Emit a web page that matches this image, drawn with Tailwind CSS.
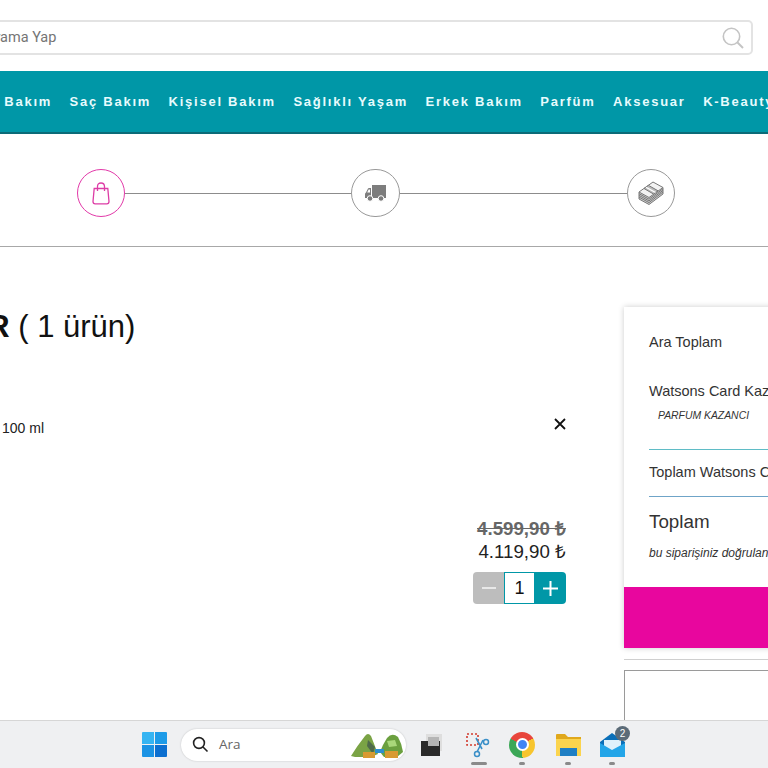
<!DOCTYPE html>
<html lang="en">
  <head>
    <meta charset="UTF-8" />
    <title>Sepet</title>
    <script src="https://cdn.jsdelivr.net/npm/@tailwindcss/browser@4"></script>
  </head>
  <body class="w-[768px] h-[768px] overflow-hidden bg-white flex flex-col font-['Liberation_Sans',sans-serif] text-[#222]">
    <main class="flex-1 min-h-0 overflow-hidden">
      <!-- search -->
      <div class="h-[71px] pt-[20px] pr-[15px]">
        <div class="h-[35px] -ml-[36px] flex items-center justify-between border-2 border-[#e3e3e3] rounded-[5px] pl-[20px] pr-[6px]">
          <span class="font-['Roboto',sans-serif] text-[14.5px] text-[#757575]">Arama Yap</span>
          <svg width="24" height="24" viewBox="0 0 24 24" fill="none" stroke="#c4c4c4" stroke-width="1.6">
            <circle cx="10.5" cy="10.5" r="8.2" />
            <path d="M16.5 16.5 L22 22" stroke-width="2" />
          </svg>
        </div>
      </div>

      <!-- nav -->
      <nav class="h-[63px] bg-[#0097a7] border-b-2 border-[#0c6b78] flex items-center gap-[17.5px] -ml-[29px] whitespace-nowrap text-[13px] font-bold tracking-[1.75px] text-[#e8fbfd]">
        <span>Cilt Bakım</span>
        <span>Saç Bakım</span>
        <span>Kişisel Bakım</span>
        <span>Sağlıklı Yaşam</span>
        <span>Erkek Bakım</span>
        <span>Parfüm</span>
        <span>Aksesuar</span>
        <span>K-Beauty</span>
      </nav>

      <!-- checkout steps -->
      <div class="h-[113px] border-b border-[#a8a8a8] pl-[77px] pr-[93px] pt-[6px] flex items-center">
        <div class="w-[48px] h-[48px] shrink-0 rounded-full border border-[#e23aa9] flex items-center justify-center">
          <svg width="18" height="23" viewBox="0 0 18 23" fill="none" stroke="#dd3da6" stroke-width="1.3">
            <path d="M2.2 6.5 H15.8 L17 19.5 Q17 21.8 14.8 21.8 H3.2 Q1 21.8 1 19.5 Z" />
            <path d="M5.5 9 V4.6 Q5.5 1 9 1 Q12.5 1 12.5 4.6 V9" />
          </svg>
        </div>
        <div class="w-[226px] h-px bg-[#8c8c8c]"></div>
        <div class="w-[49px] h-[48px] shrink-0 rounded-full border border-[#999] flex items-center justify-center">
          <svg width="21" height="18" viewBox="0 0 21 18" fill="#7d7d7d">
            <path d="M7 1 H21 V14 H7 Z" />
            <path d="M6 4 V14 H0 V10 Q0 9 1 8.5 L3 4.5 Q3.3 4 4 4 Z" />
            <path d="M3.6 5.5 H5 V8.5 H2.2 Z" fill="#fff" />
            <circle cx="5" cy="14.5" r="2.8" stroke="#fff" stroke-width="1" />
            <circle cx="16" cy="14.5" r="2.8" stroke="#fff" stroke-width="1" />
          </svg>
        </div>
        <div class="flex-1 h-px bg-[#8c8c8c]"></div>
        <div class="w-[48px] h-[48px] shrink-0 rounded-full border border-[#999] flex items-center justify-center">
          <svg width="26" height="24" viewBox="0 0 26 24" fill="none" stroke="#777" stroke-width="1">
            <path d="M1 11 V18 L11 23.5 L25 13 V6.5" fill="#cfcfcf" />
            <path d="M1 12.7 L11 18.2 L25 7.8 M1 14.4 L11 19.9 L25 9.4 M1 16.1 L11 21.6 L25 11" />
            <path d="M1 11 L15 1 L25 6.5 L11 16.5 Z" fill="#f2f2f2" />
            <path d="M6 7.5 L15.5 13 L20 9.8 L10.5 4.4 Z" fill="#bdbdbd" />
            <path d="M8 6.2 L17.5 11.6" stroke="#fff" stroke-width="1.2" />
          </svg>
        </div>
      </div>

      <!-- cart -->
      <div class="flex gap-[58px] -ml-[40px] whitespace-nowrap">
        <section class="w-[606px] shrink-0 pt-[62px]">
          <h1 class="text-[31px] leading-[36px] text-[#111] -ml-[114px]"><b>SEPETLER</b> ( 1 ürün)</h1>
          <div class="mt-[71px] pl-[1px] flex items-start justify-between">
            <p class="text-[14px] leading-[20px] pl-[41px] mt-[2px]">100 ml</p>
            <svg class="mt-[2px]" width="12" height="12" viewBox="0 0 12 12" stroke="#111" stroke-width="1.8">
              <path d="M1 1 L11 11 M11 1 L1 11" />
            </svg>
          </div>
          <div class="mt-[79px] flex flex-col items-end">
            <p class="text-[18.7px] leading-[24px] font-bold line-through text-[#666]">4.599,90 ₺</p>
            <p class="text-[18.7px] leading-[21px] text-[#222]">4.119,90 ₺</p>
            <div class="mt-[10px] flex h-[32px] w-[93px]">
              <button class="w-[31px] rounded-l-[4px] bg-[#bdbdbd] flex items-center justify-center">
                <svg width="14" height="14" viewBox="0 0 14 14" stroke="#e8e8e8" stroke-width="2"><path d="M0 7 H14" /></svg>
              </button>
              <div class="w-[31px] border border-[#0097a7] bg-white flex items-center justify-center text-[18px] text-[#111]">1</div>
              <button class="w-[31px] rounded-r-[4px] bg-[#0097a7] flex items-center justify-center">
                <svg width="15" height="15" viewBox="0 0 15 15" stroke="#fff" stroke-width="2"><path d="M0 7.5 H15 M7.5 0 V15" /></svg>
              </button>
            </div>
          </div>
        </section>

        <aside class="w-[300px] shrink-0 pt-[60px]">
          <div class="shadow-[0_0_6px_rgba(0,0,0,0.2)]">
            <div class="h-[280px] px-[25px] pt-[25px] text-[14.5px] leading-[20px] text-[#333]">
              <p>Ara Toplam</p>
              <p class="mt-[29px]">Watsons Card Kazancı</p>
              <p class="mt-[7px] pl-[9px] text-[10.4px] leading-[16px] italic">PARFUM KAZANCI</p>
              <div class="mt-[25px] border-t border-[#5fbcc6] pt-[12px] pb-[14px] border-b border-b-[#6fa4c8]">Toplam Watsons Card</div>
              <p class="mt-[13px] text-[18.8px] leading-[24px]">Toplam</p>
              <p class="mt-[10px] text-[12px] leading-[18px] italic">bu siparişiniz doğrulandığında</p>
            </div>
            <div class="h-[61px] bg-[#e8069e]"></div>
          </div>
          <div class="mt-[11px] border-t border-[#cfcfcf]"></div>
          <div class="mt-[10px] h-[80px] border border-[#9a9a9a]"></div>
        </aside>
      </div>
    </main>

    <!-- windows taskbar -->
    <footer class="h-[48px] shrink-0 bg-[#eff0f2] border-t border-[#d6d6d6] flex items-center pl-[142px]">
      <svg width="25" height="25" viewBox="0 0 25 25" class="shrink-0">
        <path d="M0 1 Q0 0 1 0 H12 V12 H0 Z" fill="#35b4f2" />
        <path d="M13 0 H24 Q25 0 25 1 V12 H13 Z" fill="#1d9be8" />
        <path d="M0 13 H12 V25 H1 Q0 25 0 24 Z" fill="#1b93e4" />
        <path d="M13 13 H25 V24 Q25 25 24 25 H13 Z" fill="#0c6fd0" />
      </svg>
      <div class="ml-[14px] w-[225px] h-[32px] rounded-full bg-white shadow-[0_0_2px_rgba(0,0,0,0.2)] flex items-center pl-[11px] font-['Open_Sans',sans-serif] text-[13.5px] text-[#666]">
        <svg width="17" height="17" viewBox="0 0 17 17" fill="none" stroke="#222" stroke-width="1.6">
          <circle cx="7" cy="7" r="5.4" />
          <path d="M11 11 L15.5 15.5" />
        </svg>
        <span class="ml-[10px]">Ara</span>
        <svg class="ml-auto mr-[3px]" width="52" height="26" viewBox="0 0 52 26">
          <path d="M0 24 Q6 14 14 4 Q17 0 20 4 L27 22 L20 25 H4 Z" fill="#7aa345" />
          <path d="M29 20 Q32 12 36 6 Q41 0 47 5 Q51 12 52 20 L46 25 H33 Z" fill="#6ba03f" />
          <path d="M17 8 L24 15 L22 22 L16 14 Z" fill="#4f6a4a" />
          <path d="M24 17 H33 V21 H24 Z" fill="#2d8fd0" />
          <path d="M12 20 H24 V26 H12 Z M34 19 H47 V26 H34 Z" fill="#d89a32" />
          <path d="M36 9 L44 8 L46 14 L38 15 Z" fill="#a9d77a" />
        </svg>
      </div>

      <div class="ml-[14px] w-[22px] h-[22px] shrink-0 relative">
        <div class="absolute right-0 top-0 w-[16px] h-[17px] bg-[#dedede]"></div>
        <div class="absolute left-[1px] bottom-0 w-[19px] h-[15px] bg-[#2a2a2a]"></div>
        <div class="absolute left-[8px] top-[3px] w-[11px] h-[9px] bg-[#b5b5b5]"></div>
      </div>

      <div class="ml-[24px] w-[26px] h-[48px] shrink-0 relative flex items-center justify-center">
        <svg width="26" height="26" viewBox="0 0 26 26" fill="none">
          <rect x="1" y="2" width="11" height="11" stroke="#d23b2f" stroke-width="1.6" stroke-dasharray="2 2" />
          <path d="M10 6 L16 17 M17 8 L11 20" stroke="#3a8fc8" stroke-width="1.6" />
          <circle cx="20" cy="10" r="2.5" stroke="#3a8fc8" stroke-width="1.5" />
          <circle cx="11" cy="22" r="2.5" stroke="#3a8fc8" stroke-width="1.5" />
        </svg>
        <div class="absolute bottom-[4px] left-[5px] w-[16px] h-[3px] rounded-full bg-[#8a8a8a]"></div>
      </div>

      <div class="ml-[17px] w-[26px] h-[48px] shrink-0 relative flex items-center justify-center">
        <div class="w-[26px] h-[26px] rounded-full bg-[conic-gradient(from_300deg,#e8453c_0_33%,#f7c52e_33%_66%,#3ba757_66%_100%)] flex items-center justify-center">
          <div class="w-[13px] h-[13px] rounded-full bg-[#4285f4] border-2 border-white"></div>
        </div>
        <div class="absolute bottom-[4px] left-[10px] w-[6px] h-[3px] rounded-full bg-[#8a8a8a]"></div>
      </div>

      <div class="ml-[21px] w-[25px] h-[48px] shrink-0 relative flex items-center justify-center">
        <svg width="25" height="22" viewBox="0 0 25 22">
          <path d="M0 1 Q0 0 1 0 H9 L12 3 H25 V8 H0 Z" fill="#e0a81c" />
          <path d="M0 5 H25 V22 H0 Z" fill="#fbd44e" />
          <path d="M4 14 H21 V22 H4 Z" fill="#1f7fc4" />
        </svg>
        <div class="absolute bottom-[4px] left-[9px] w-[6px] h-[3px] rounded-full bg-[#8a8a8a]"></div>
      </div>

      <div class="ml-[19px] w-[25px] h-[48px] shrink-0 relative flex items-center justify-center">
        <svg width="25" height="24" viewBox="0 0 25 24">
          <path d="M0 9 L12 0 L25 9 V24 H0 Z" fill="#0b6fb8" />
          <path d="M4 7 H21 V15 L12 20 L4 15 Z" fill="#dff1fb" />
          <path d="M0 10 L12 17 L25 10 V24 H0 Z" fill="#23a5e8" />
        </svg>
        <div class="absolute top-[5px] -right-[5px] w-[15px] h-[15px] rounded-full bg-[#5b6b78] text-white text-[10px] leading-[15px] text-center">2</div>
        <div class="absolute bottom-[4px] left-[9px] w-[6px] h-[3px] rounded-full bg-[#8a8a8a]"></div>
      </div>
    </footer>
  </body>
</html>
